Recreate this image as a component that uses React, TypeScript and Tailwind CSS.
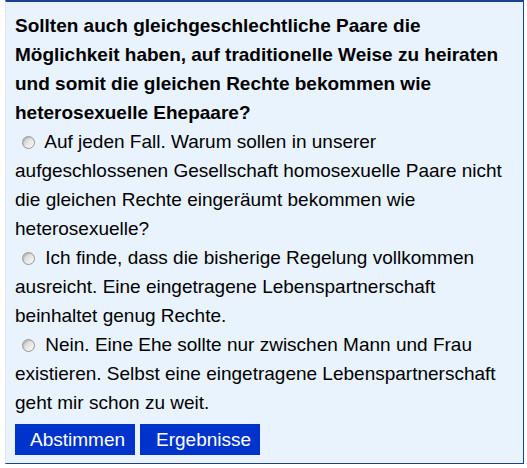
import React from 'react';

const options = [
  'Auf jeden Fall. Warum sollen in unserer aufgeschlossenen Gesellschaft homosexuelle Paare nicht die gleichen Rechte eingeräumt bekommen wie heterosexuelle?',
  'Ich finde, dass die bisherige Regelung vollkommen ausreicht. Eine eingetragene Lebenspartnerschaft beinhaltet genug Rechte.',
  'Nein. Eine Ehe sollte nur zwischen Mann und Frau existieren. Selbst eine eingetragene Lebenspartnerschaft geht mir schon zu weit.',
];

const Radio: React.FC = () => (
  <span className="ml-[7px] mr-[5px] inline-block h-[13px] w-[13px] rounded-full border border-[#969696] bg-gradient-to-br from-[#c4c4c4] via-[#e6e6e6] to-[#fcfcfc] align-[-1px] shadow-[inset_1px_1px_1px_rgba(0,0,0,0.12)]" />
);

export default function App() {
  return (
    <div className="min-h-[468px] bg-white font-['Liberation_Sans',Arial,sans-serif] text-[19px] leading-[29px] text-black">
      <div className="ml-[5px] w-[519px] border border-t-2 border-[#1d3f93] border-l-[#dde6f2] bg-[#e9f3fd] pb-[8px] pl-[9px] pr-[10px] pt-[9px]">
        <p className="font-bold">
          Sollten auch gleichgeschlechtliche Paare die Möglichkeit haben, auf traditionelle Weise zu heiraten und somit die gleichen Rechte bekommen wie heterosexuelle Ehepaare?
        </p>
        {options.map(text => (
          <p key={text}>
            <Radio /> {text}
          </p>
        ))}
        <div className="mt-[7px] flex gap-[5px]">
          <button className="h-[31px] bg-[#0033cc] pl-[15px] pr-[10px] text-white">Abstimmen</button>
          <button className="h-[31px] bg-[#0033cc] pl-[16px] pr-[9px] text-white">Ergebnisse</button>
        </div>
      </div>
    </div>
  );
}
